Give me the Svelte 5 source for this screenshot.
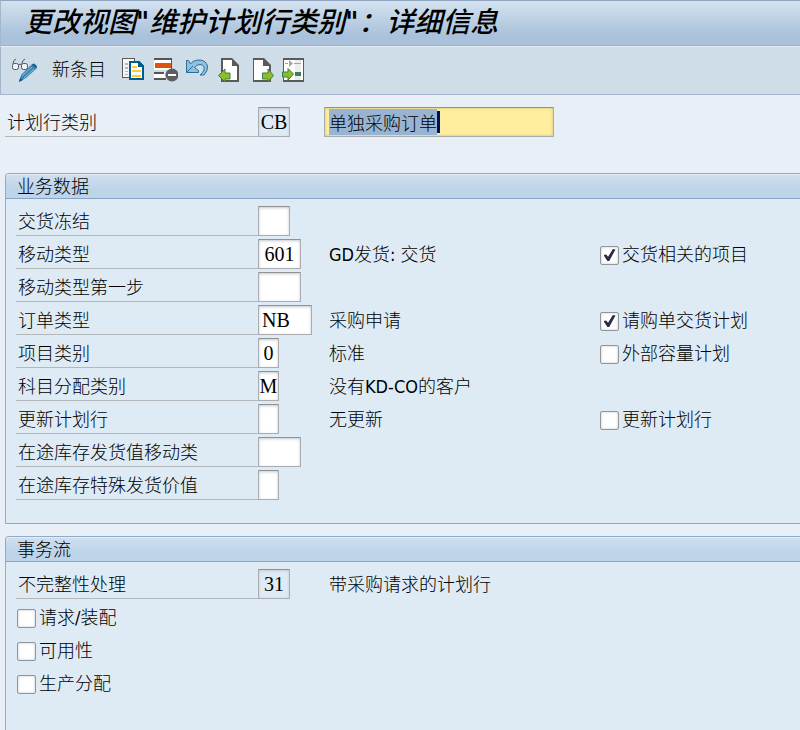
<script>
  import { onMount } from "svelte";

  let nameInput;

  onMount(() => {
    nameInput.focus();
    nameInput.select();
  });

  const businessRows = [
    { id: "block", label: "交货冻结", value: "", size: 2 },
    {
      id: "move",
      label: "移动类型",
      value: "601",
      size: 3,
      text: "GD发货: 交货",
      check: { label: "交货相关的项目", checked: true },
    },
    { id: "move-first", label: "移动类型第一步", value: "", size: 3 },
    {
      id: "order",
      label: "订单类型",
      value: "NB",
      size: 4,
      text: "采购申请",
      check: { label: "请购单交货计划", checked: true },
    },
    {
      id: "item",
      label: "项目类别",
      value: "0",
      size: 1,
      text: "标准",
      check: { label: "外部容量计划", checked: false },
    },
    {
      id: "account",
      label: "科目分配类别",
      value: "M",
      size: 1,
      text: "没有KD-CO的客户",
    },
    {
      id: "update",
      label: "更新计划行",
      value: "",
      size: 1,
      text: "无更新",
      check: { label: "更新计划行", checked: false },
    },
    { id: "transit-move", label: "在途库存发货值移动类", value: "", size: 3 },
    { id: "transit-value", label: "在途库存特殊发货价值", value: "", size: 1 },
  ];

  const flowChecks = ["请求/装配", "可用性", "生产分配"];
</script>

<div class="window">
  <header class="titlebar">
    <h1>更改视图<b>"</b>维护计划行类别<b>"</b>：详细信息</h1>
  </header>

  <nav class="toolbar">
    <button class="tool" aria-label="显示/更改">
      <svg viewBox="0 0 26 24" width="26" height="24">
        <g fill="#eef3f6" stroke="#4d565c" stroke-width="1">
          <rect x="0.5" y="5.5" width="6" height="6" rx="2" />
          <rect x="9.5" y="5.5" width="6" height="6" rx="2" />
          <path d="M1 6 Q1 2 4 1M10 6Q10 2 13 1M6.5 7Q8 5 9.5 7" fill="none" />
        </g>
        <path d="M7 24L9 17L19 7L24 11L14 20Z" fill="#3c86b4" />
        <path d="M19 7Q22 4 24 7Q26 9 24 11Z" fill="#1d6695" />
        <path d="M10 18L20 9M12 20L22 11" stroke="#86bddc" stroke-width="1" />
        <path d="M7 24L8 20L11 22Z" fill="#15567f" />
      </svg>
    </button>
    <button class="tool-text">新条目</button>
    <div class="tools">
      <button class="tool" aria-label="复制为">
        <svg viewBox="0 0 24 24" width="24" height="24" shape-rendering="crispEdges">
          <path d="M0 0H13V3H7V20H0Z" fill="#5a5a5a" />
          <path d="M1 1H12V3H7V19H1Z" fill="#f3f5f6" />
          <path d="M3 5H6V7H3ZM3 9H6V11H3ZM3 13H6V14H3ZM3 16H6V17H3Z" fill="#b5b8ba" />
          <path d="M7 3H17L22 8V22H7Z" fill="#005d91" />
          <path d="M9 5H16V9H20V20H9Z" fill="#fff" />
          <path d="M10 8H15V10H10ZM10 12H19V14H10ZM10 17H19V19H10Z" fill="#fdcb35" />
        </svg>
      </button>
      <button class="tool" aria-label="删除">
        <svg viewBox="0 0 24 24" width="24" height="24">
          <path d="M0 0H18V12H0ZM0 14H11V22H0Z" fill="#fff" />
          <path d="M0 0H18V2H0ZM17 0H18V12H17ZM0 14H10V16H0ZM0 20H12V22H0Z" fill="#555" />
          <path d="M1 5H17V10H1Z" fill="#dc550c" />
          <circle cx="18" cy="17" r="6.5" fill="#5b5f62" />
          <path d="M14 16H22V18H14Z" fill="#fff" />
        </svg>
      </button>
      <button class="tool" aria-label="撤消更改">
        <svg viewBox="0 0 24 24" width="24" height="24">
          <path
            d="M0.5 2.5V14.5H12.500V12.500L8.5 9.5Q11 6 15 6.5Q19 8 18 12Q17.500 14 14 17H18Q22 13 21.500 8Q20 2.500 14 2Q7 2 4.500 6L2.500 2.500Z"
            fill="#91c0dd"
            stroke="#286d9b"
          />
          <path d="M1 14L7 8" stroke="#286d9b" stroke-width="1" />
        </svg>
      </button>
      <button class="tool" aria-label="上一条目">
        <svg viewBox="0 0 24 24" width="24" height="24">
          <path d="M3 0H14L21 7V24H3Z" fill="#5a5a5a" />
          <path d="M5 2H14V8H19V22H5Z" fill="#fff" />
          <path d="M0.5 17.500L7 11V15H12V21H7V24Z" fill="#8dbd2b" stroke="#3b7f43" />
        </svg>
      </button>
      <button class="tool" aria-label="下一条目">
        <svg viewBox="0 0 24 24" width="24" height="24">
          <path d="M3 0H14L21 7V24H3Z" fill="#5a5a5a" />
          <path d="M4 2H13V8H19V22H4Z" fill="#fff" />
          <path d="M23.500 17.500L18 11V15H12.500V21H18V24Z" fill="#8dbd2b" stroke="#3b7f43" />
        </svg>
      </button>
      <button class="tool" aria-label="其他条目">
        <svg viewBox="0 0 24 24" width="24" height="24">
          <path d="M1 0H22V24H1Z" fill="#5a5a5a" />
          <path d="M2 2H21V22H2Z" fill="#fff" />
          <path d="M13 2H19V22H13Z" fill="#ececec" />
          <path d="M3 5H6V6H3ZM7 2L11 5.500L7 9ZM12 5H19V6H12Z" fill="#a4a4a4" />
          <path d="M13 14H19V18H13Z" fill="#3b7f55" />
          <path d="M11.500 16L6 10.500V14H0.500V19H6V22Z" fill="#8dbd2b" stroke="#3b7f43" />
        </svg>
      </button>
    </div>
  </nav>

  <main>
    <div class="row key-row">
      <label class="label" for="category">计划行类别</label>
      <input id="category" class="field size-2 readonly" value="CB" readonly />
      <div class="name-wrap">
        <input
          class="name"
          aria-label="计划行类别描述"
          value="单独采购订单"
          bind:this={nameInput}
        />
        <span class="caret"></span>
      </div>
    </div>

    <section class="group business">
      <h2>业务数据</h2>
      <div class="group-body">
        {#each businessRows as row}
          <div class="row">
            <label class="label" for={row.id}>{row.label}</label>
            <input id={row.id} class="field size-{row.size}" value={row.value} />
            <span class="text">{row.text ?? ""}</span>
            {#if row.check}
              <label class="check">
                <input type="checkbox" checked={row.check.checked} />
                <span class="text">{row.check.label}</span>
              </label>
            {/if}
          </div>
        {/each}
      </div>
    </section>

    <section class="group flow">
      <h2>事务流</h2>
      <div class="group-body">
        <div class="row">
          <label class="label" for="incomplete">不完整性处理</label>
          <input id="incomplete" class="field size-2 readonly" value="31" readonly />
          <span class="text">带采购请求的计划行</span>
        </div>
        {#each flowChecks as label}
          <label class="check">
            <input type="checkbox" />
            <span class="text">{label}</span>
          </label>
        {/each}
      </div>
    </section>
  </main>
</div>

<style>
  :global(body) {
    margin: 0;
    background: #e8eff7;
  }

  .window {
    display: flex;
    flex-direction: column;
    box-sizing: border-box;
    min-height: 100vh;
    overflow: hidden;
    color: #000;
    font-family: "DejaVu Sans Condensed", "Noto Sans CJK SC", sans-serif;
    font-size: 18px;
    font-weight: 300;
    line-height: 24px;
    white-space: nowrap;
  }

  button,
  input {
    font: inherit;
    color: inherit;
  }

  .titlebar {
    box-sizing: border-box;
    height: 46px;
    padding-left: 23px;
    border-top: 1px solid #8fa5bf;
    border-bottom: 1px solid #9fb1c8;
    border-left: 1px solid #a3b6cb;
    background: linear-gradient(#d4e2ef, #a9c1da 80%);
  }

  h1 {
    margin: 0;
    font-size: 28px;
    font-style: italic;
    font-weight: 500;
    line-height: 44px;
  }

  h1 b {
    font-weight: 700;
  }

  .toolbar {
    display: flex;
    align-items: center;
    box-sizing: border-box;
    height: 49px;
    padding: 0 0 2px 11px;
    border-top: 1px solid #e6eef5;
    border-bottom: 1px solid #a3b6cb;
    border-left: 1px solid #a3b6cb;
    background: #cfdde8;
  }

  .toolbar button {
    padding: 0;
    border: 0;
    background: none;
  }

  .tool {
    display: flex;
  }

  .toolbar .tool-text {
    margin: 0 16px 0 14px;
  }

  .tools {
    display: flex;
    gap: 8px;
  }

  main {
    display: flex;
    flex: 1;
    flex-direction: column;
    padding: 12px 0 0 5px;
  }

  .row {
    display: grid;
    grid-template-columns: 242px 71px 271px 1fr;
    height: 33px;
  }

  .key-row {
    grid-template-columns: 253px 66px 230px;
    margin-bottom: 33px;
  }

  .label {
    box-sizing: border-box;
    height: 30px;
    padding-left: 2px;
    border-bottom: 1px solid #b4b8ba;
    line-height: 32px;
  }

  .field {
    box-sizing: border-box;
    height: 30px;
    padding: 0;
    border: 1px solid #a9acb0;
    border-top-color: #8e9196;
    border-radius: 1px;
    outline: 0;
    background: #fff;
    box-shadow: inset 0 1px 3px #c4c9cf;
    font-family: "Liberation Serif", serif;
    font-size: 20px;
    font-weight: 400;
    text-align: center;
  }

  .size-1 {
    width: 21px;
  }

  .size-2 {
    width: 32px;
  }

  .size-3 {
    width: 43px;
  }

  .size-4 {
    width: 54px;
    padding-left: 3px;
    text-align: left;
  }

  .readonly {
    background: #deebf5;
  }

  .name-wrap {
    position: relative;
    height: 30px;
  }

  .name {
    box-sizing: border-box;
    width: 100%;
    height: 30px;
    padding: 0 4px;
    border: 1px solid #a9acb0;
    border-top-color: #8e9196;
    border-radius: 1px;
    outline: 0;
    background: #ffee9e;
    box-shadow: inset 0 0 3px #c9bb78;
    line-height: 22px;
  }

  .name::selection {
    background: #99b4d1;
    color: #000;
  }

  .caret {
    position: absolute;
    top: 4px;
    left: 113px;
    width: 3px;
    height: 22px;
    background: #00105c;
  }

  .group {
    border: 1px solid #8eabcb;
    border-right: 0;
    border-radius: 4px 0 0 0;
    background: #deebf5;
  }

  .business {
    margin-bottom: 12px;
  }

  .flow {
    flex: 1;
    border-bottom: 0;
  }

  h2 {
    margin: 0;
    padding-left: 11px;
    border-top: 1px solid #e4eef7;
    border-bottom: 1px solid #86a3c8;
    border-radius: 3px 0 0 0;
    background: linear-gradient(#cfdfee, #bed4e9 60%);
    font-size: 18px;
    font-weight: 300;
    line-height: 23px;
  }

  .group-body {
    padding: 7px 0 20px 10px;
  }

  .text {
    line-height: 32px;
  }

  .check {
    display: grid;
    grid-template-columns: 19px 1fr;
    column-gap: 3px;
    height: 30px;
  }

  .flow .check {
    margin: 0 0 3px 1px;
  }

  .check input {
    display: grid;
    place-items: center;
    align-self: center;
    appearance: none;
    box-sizing: border-box;
    width: 19px;
    height: 19px;
    margin: 0;
    border: 1px solid #92969a;
    border-radius: 2px;
    background: #fff;
    box-shadow: inset 0 0 3px #c4c9cf;
  }

  .check input:checked::before {
    content: "";
    width: 12px;
    height: 12px;
    background: #2c2d45;
    clip-path: polygon(0 50%, 22% 45%, 38% 65%, 78% 0, 100% 4%, 48% 100%, 32% 100%);
  }
</style>
